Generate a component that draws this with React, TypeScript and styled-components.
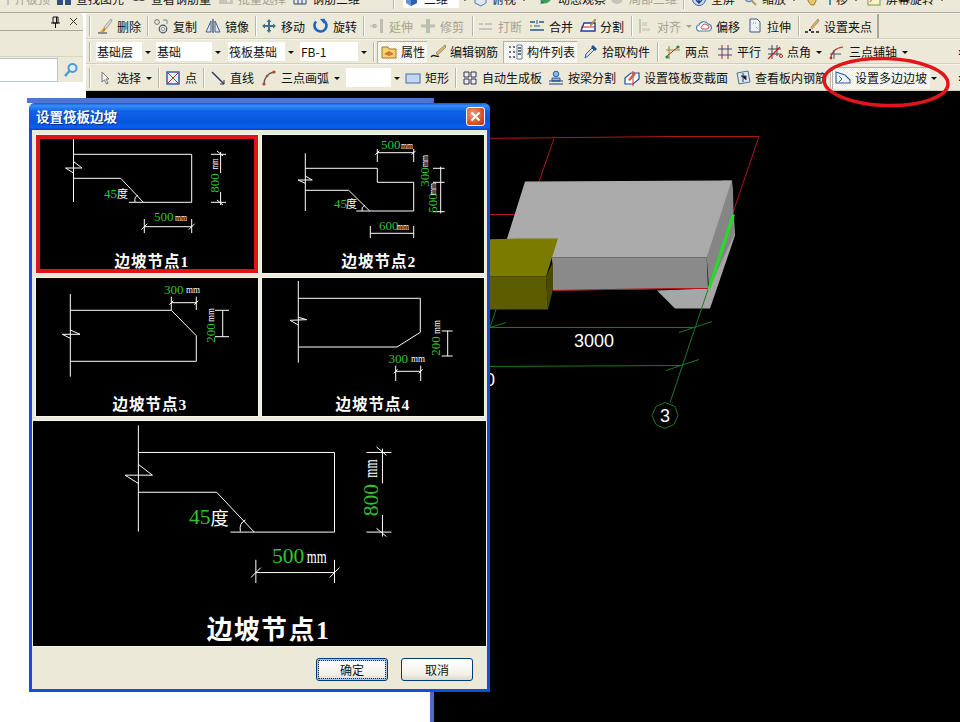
import React from 'react'
import styled, { createGlobalStyle } from 'styled-components'

const UI_FONT = '"Noto Sans CJK SC", "Liberation Sans", sans-serif'
const DRAW_FONT = '"Liberation Serif", "Noto Sans CJK SC", serif'

const GlobalStyle = createGlobalStyle`
  html, body {
    margin: 0;
    padding: 0;
    background: #000;
    overflow: hidden;
  }
`

const Desktop = styled.div`
  position: relative;
  width: 960px;
  height: 722px;
  overflow: hidden;
  display: flex;
  flex-direction: column;
  font-family: ${UI_FONT};
  font-size: 12px;
  color: #111;
`

const Row = styled.div<{ $h: number }>`
  flex: none;
  height: ${p => p.$h}px;
  display: flex;
  align-items: center;
  background: #ece9d8;
  box-sizing: border-box;
  white-space: nowrap;
  overflow: hidden;
`

const TopBar = styled(Row)`
  margin-top: -15px;
  border-bottom: 1px solid #aca899;
`

const Body = styled.div`
  flex: 1;
  display: flex;
  min-height: 0;
`

const LeftPanel = styled.div`
  flex: none;
  width: 86px;
  background: #fff;
  display: flex;
  flex-direction: column;
`

const PanelHead = styled.div`
  width: 83px;
  height: 18px;
  box-sizing: border-box;
  display: flex;
  align-items: center;
  justify-content: flex-end;
  gap: 9px;
  padding-right: 5px;
  background: #ece9d8;
  border-bottom: 1px solid #aca899;
  border-radius: 0 4px 0 0;
`

const PanelBand = styled.div`
  width: 83px;
  height: 26px;
  background: #ece9d8;
  border-bottom: 1px solid #d8d5c2;
  box-sizing: border-box;
`

const SearchRow = styled.div`
  width: 83px;
  height: 25px;
  display: flex;
  align-items: center;
  background: #ece9d8;
`

const SearchBox = styled.div`
  width: 58px;
  height: 24px;
  background: #fff;
  border: 1px solid #b9c4d4;
  border-left: none;
  box-sizing: border-box;
`

const SearchGo = styled.div`
  flex: 1;
  display: flex;
  justify-content: center;
`

const Work = styled.div`
  flex: 1;
  min-width: 0;
  display: flex;
  flex-direction: column;
`

const ToolRow = styled(Row)`
  border-top: 1px solid #f6f4ea;
  border-bottom: 1px solid #d2cfbb;
`

const ShortEdge = styled.div`
  flex: none;
  align-self: stretch;
  width: 2px;
  background: #aca899;
`

const Grip = styled.span`
  flex: none;
  box-sizing: border-box;
  width: 2px;
  height: 20px;
  margin: 0 3px 0 3px;
  border-left: 1px solid #b4b09c;
  border-right: 1px solid #fff;
`

const Sep = styled.span<{ $w?: number }>`
  flex: none;
  width: ${p => p.$w ?? 6}px;
  height: 20px;
  display: flex;
  justify-content: center;
  &::before {
    content: '';
    width: 1px;
    height: 100%;
    background: #b9b5a0;
    box-shadow: 1px 0 0 #fff;
  }
`

const Gap = styled.span<{ $w: number }>`
  flex: none;
  width: ${p => p.$w}px;
`

const ToolBtn = styled.div<{ $w: number; $pad?: number; $off?: boolean; $on?: boolean }>`
  flex: none;
  width: ${p => p.$w}px;
  height: 22px;
  box-sizing: border-box;
  display: flex;
  align-items: center;
  gap: 4px;
  padding-left: ${p => p.$pad ?? 3}px;
  color: ${p => (p.$off ? '#a5a290' : '#111')};
  ${p =>
    p.$on
      ? `background: repeating-conic-gradient(#fff 0 25%, #f0eee2 0 50%) 0 0 / 2px 2px;
         box-shadow: inset 1px 1px 0 #b5b19c;`
      : ''}
  & > svg {
    flex: none;
    opacity: ${p => (p.$off ? 0.45 : 1)};
  }
`

const Arrow = styled.span<{ $off?: boolean }>`
  flex: none;
  width: 0;
  height: 0;
  margin: 1px 0 0 1px;
  border-left: 3px solid transparent;
  border-right: 3px solid transparent;
  border-top: 3px solid ${p => (p.$off ? '#a5a290' : '#111')};
`

const Combo = styled.div<{ $w: number; $after?: number; $before?: number }>`
  flex: none;
  width: ${p => p.$w}px;
  height: 19px;
  margin-left: ${p => p.$before ?? 0}px;
  margin-right: ${p => p.$after ?? 0}px;
  display: flex;
  align-items: center;
`

const ComboField = styled.div`
  flex: 1;
  height: 100%;
  background: #fff;
  display: flex;
  align-items: center;
  gap: 4px;
  padding-left: 1px;
  font-size: 12px;
  line-height: 19px;
  overflow: hidden;
`

const ComboArrow = styled.div`
  flex: none;
  width: 10px;
  display: flex;
  justify-content: center;
`

const Chevron = styled.span`
  margin-left: auto;
  margin-right: -5px;
  font: bold 12px "Liberation Sans", sans-serif;
`

const Canvas = styled.div`
  flex: 1;
  min-height: 0;
  background: #000;
`

const SceneSvg = styled.svg`
  display: block;
  width: 100%;
  height: 100%;
`

const BackWindow = styled.div`
  position: absolute;
  left: 27px;
  top: 98px;
  width: 407px;
  height: 640px;
  box-sizing: border-box;
  background: #fff;
  border-top: 5px solid #4f74d8;
  border-right: 4px solid #4f6cc4;
`

const Dialog = styled.div`
  position: absolute;
  left: 29px;
  top: 103px;
  width: 461px;
  height: 589px;
  box-sizing: border-box;
  display: flex;
  flex-direction: column;
  background: #ece9d8;
  border: 3px solid #0a50d8;
  border-top: none;
  border-radius: 6px 6px 0 0;
`

const TitleBar = styled.div`
  flex: none;
  height: 27px;
  margin: 0 -3px;
  padding: 0 5px 0 7px;
  display: flex;
  align-items: center;
  justify-content: space-between;
  border-radius: 6px 6px 0 0;
  background: linear-gradient(#0a58d8 0, #3a8dfa 10%, #0f63e6 30%, #0656de 70%, #0a5ff0 90%, #0442b8 100%);
`

const TitleText = styled.span`
  font-size: 13.5px;
  font-weight: 700;
  color: #fff;
  text-shadow: 1px 1px 0 #0a2f8c;
  margin-top: -2px;
`

const CloseBtn = styled.div`
  width: 19px;
  height: 19px;
  box-sizing: border-box;
  border: 1px solid #fff;
  border-radius: 3px;
  background: radial-gradient(circle at 35% 35%, #f0a080, #d8532c 60%, #b83010);
  display: flex;
  align-items: center;
  justify-content: center;
`

const Tiles = styled.div`
  flex: none;
  display: grid;
  grid-template-columns: 222px 222px;
  grid-auto-rows: 138px;
  column-gap: 4px;
  row-gap: 5px;
  padding: 5px 0 0 4px;
`

const Tile = styled.div<{ $picked?: boolean }>`
  background: #000;
  box-shadow: 0 0 0 1px #f8f6ec;
  ${p => (p.$picked ? 'outline: 4px solid #e01414; outline-offset: -4px;' : '')}
`

const Preview = styled.div`
  flex: none;
  width: 453px;
  height: 225px;
  margin: 5px 0 0 1px;
  background: #000;
  box-shadow: 0 0 0 1px #f8f6ec;
`

const DiagramSvg = styled.svg`
  display: block;
  width: 100%;
  height: 100%;
`

const Wire = styled.polyline`
  fill: none;
  stroke: #fff;
  stroke-width: 1;
  vector-effect: non-scaling-stroke;
`

const Num = styled.text`
  fill: #2fc42f;
  font-family: ${DRAW_FONT};
  font-size: 13px;
`

const Unit = styled.text`
  fill: #fff;
  font-family: ${DRAW_FONT};
  font-size: 11px;
`

const TileLabel = styled.text`
  fill: #fff;
  font-family: ${DRAW_FONT};
  font-size: 15.5px;
  font-weight: 700;
  letter-spacing: 1px;
  text-anchor: middle;
`

const Footer = styled.div`
  flex: 1;
  display: flex;
  align-items: center;
  justify-content: flex-end;
  gap: 13px;
  padding: 4px 14px 0 0;
`

const DialogBtn = styled.div<{ $focus?: boolean }>`
  width: 72px;
  height: 23px;
  box-sizing: border-box;
  border: 1px solid #003c74;
  border-radius: 3px;
  background: linear-gradient(#fff, #f3f2ea 70%, #dcd8cc);
  display: flex;
  align-items: center;
  justify-content: center;
  font-size: 12px;
  ${p => (p.$focus ? 'box-shadow: inset 0 0 0 2px #a8c0ec; outline: 1px dotted #333; outline-offset: -3px;' : '')}
`

const RedMark = styled.svg`
  position: absolute;
  left: 815px;
  top: 52px;
  width: 145px;
  height: 60px;
`

type IconName =
  | 'find' | 'rebar' | 'batch' | 'rebar3d' | 'cube' | 'look' | 'orbit' | 'local' | 'full' | 'zoom' | 'pan' | 'screen'
  | 'erase' | 'copy' | 'mirror' | 'move' | 'rotate' | 'extend' | 'trim' | 'cut' | 'merge' | 'split' | 'align'
  | 'offset' | 'stretch' | 'grip' | 'prop' | 'edit' | 'list' | 'pick' | 'twoPt' | 'parallel' | 'angle' | 'arcAxis'
  | 'select' | 'point' | 'line' | 'arc' | 'rect' | 'auto' | 'beam' | 'section' | 'inspect' | 'slope'

const ToolIcon: React.FC<{ name: IconName }> = ({ name }) => {
  const shapes: Record<IconName, React.ReactNode> = {
    find: <><path d="M1 3h6v4H1zM9 3h6v4H9zM1 9h6v5H1zM9 9h6v5H9z" fill="#35507e" /></>,
    rebar: <><circle cx="5" cy="6" r="3" fill="none" stroke="#444" strokeWidth="2" /><circle cx="11" cy="6" r="3" fill="none" stroke="#444" strokeWidth="2" /></>,
    batch: <><rect x="1" y="2" width="14" height="11" fill="#999" /><path d="M4 5h3v3H4zM9 8h3v3H9z" fill="#eee" /></>,
    rebar3d: <><path d="M2 3h12v10H2zM6 3v10M10 3v10M2 8h12" fill="none" stroke="#234a8c" /></>,
    cube: <><path d="M2 5l5-3 6 2v8l-6 3-5-3z" fill="#5f8fd8" /><path d="M7 7v8l6-3V4z" fill="#2f5fae" /></>,
    look: <><path d="M3 5l6-3 5 3v7l-5 3-6-3z" fill="#dfe8f4" stroke="#5577a8" /></>,
    orbit: <><ellipse cx="8" cy="8" rx="6" ry="4" fill="#3e9b58" transform="rotate(-30 8 8)" /><path d="M2 13l4-1-2-2z" fill="#1f5f8e" /></>,
    local: <><circle cx="8" cy="7" r="6" fill="#999" /><circle cx="8" cy="7" r="2" fill="#ccc" /></>,
    full: <><circle cx="8" cy="8" r="6.5" fill="#cfdcf0" stroke="#32609e" /><path d="M8 4v8M5 9l3 3 3-3" fill="none" stroke="#1f3f78" strokeWidth="1.4" /></>,
    zoom: <><circle cx="7" cy="6" r="4.5" fill="#dce9f8" stroke="#6f8aaa" strokeWidth="1.4" /><path d="M10 10l4 4" stroke="#b49a5a" strokeWidth="2" /></>,
    pan: <><path d="M4 7l2-4 2 3 2-3 2 4v3l-2 4H7L4 10z" fill="#e9c46a" stroke="#8a6a20" strokeWidth=".8" /></>,
    screen: <><rect x="2" y="2" width="12" height="12" fill="#f7f2cc" stroke="#7a9a4a" /><path d="M4 11l3-4 2 2 3-4" fill="none" stroke="#d04a3a" /></>,
    erase: <><path d="M14 1L7 9l2 2 6-8z" fill="#d8d8d8" stroke="#777" strokeWidth=".6" /><path d="M7 9l2 2-2 3H3z" fill="#e8b020" /><path d="M7 10l1 2-2 2z" fill="#c04a8a" /><path d="M1 15h9" stroke="#333" /></>,
    copy: <><circle cx="4" cy="4" r="2.4" fill="none" stroke="#677" /><circle cx="10" cy="11" r="3.8" fill="none" stroke="#456" strokeWidth="1.2" /><circle cx="10" cy="11" r="1.8" fill="none" stroke="#89a" /><path d="M10 2h4v4" fill="none" stroke="#789" /></>,
    mirror: <><path d="M1 14L6 3v11zM15 14L10 3v11z" fill="#dfe6f2" stroke="#3a5f94" /><path d="M8 1v14" stroke="#123" /></>,
    move: <><path d="M8 1l2.4 3H9v3h3V5.6L15 8l-3 2.4V9H9v3h1.4L8 15l-2.4-3H7V9H4v1.4L1 8l3-2.4V7h3V4H5.6z" fill="#3f6f8a" /></>,
    rotate: <><path d="M3 3.5a6 6 0 1 0 8-.8" fill="none" stroke="#1f62c8" strokeWidth="2.6" /><path d="M7 1l5-.2-1 5z" fill="#1f62c8" /></>,
    extend: <><path d="M1 8h7M4 6.5h3v3H4z" stroke="#777" fill="#bbb" /><rect x="11" y="1" width="3" height="14" fill="#888" /></>,
    trim: <><path d="M6 1h4v14H6z" fill="#888" /><path d="M1 8h14" stroke="#888" strokeWidth="3" /></>,
    cut: <><path d="M1 5h4v2H1zM7 5h7v2H7zM1 10h13v2H1z" fill="#999" /></>,
    merge: <><path d="M1 4h5M10 4h5M1 12h14" stroke="#245a8a" strokeWidth="1.6" /><path d="M8 2v4M5 8h6" stroke="#245a8a" /><circle cx="2" cy="8" r="1" fill="#d08a20" /></>,
    split: <><path d="M1 13l3-8h11v8z" fill="#fff" stroke="#223c9c" strokeWidth="1.4" /><path d="M1 9h14" stroke="#c02020" /><path d="M10 7l5-6 1 1-5 6z" fill="#d8b040" stroke="#6a4a10" strokeWidth=".5" /></>,
    align: <><path d="M3 1v14" stroke="#999" strokeWidth="2" /><path d="M5 4h5v4H5zM5 10h8v3H5z" fill="#bbb" /></>,
    offset: <><path d="M4 13a3 3 0 0 1-1-6 5 5 0 0 1 9-1 3.6 3.6 0 0 1 1 7z" fill="#fff" stroke="#4a86b4" strokeWidth="1.2" /><path d="M6 11a2 2 0 0 1 0-3 3 3 0 0 1 5-1 2 2 0 0 1 0 4z" fill="none" stroke="#d04040" /></>,
    stretch: <><path d="M3 1h7l3 3v10H3z" fill="#eef3fa" stroke="#345a86" /><path d="M9 9l3 3M6 5h3" stroke="#888" strokeDasharray="1 1" /></>,
    grip: <><path d="M14 1L7 9l1 2 7-8z" fill="#e8b060" stroke="#765" strokeWidth=".6" /><path d="M1 14h3M7 14h3M12 14h3" stroke="#111" strokeWidth="1.4" /><rect x="5" y="11" width="2" height="2" fill="#111" /></>,
    prop: <><path d="M1 3h6l1 2h7v9H1z" fill="#f3d274" stroke="#a47a22" /><path d="M3 10l5-3 5 3-5 2z" fill="#d8722c" /></>,
    edit: <><path d="M15 1L6 9l1.6 2L16 3z" fill="#e8c060" stroke="#555" strokeWidth=".6" /><path d="M1 13c3-4 5 1 8-1" fill="none" stroke="#222" strokeWidth="1.3" /></>,
    list: <><path d="M10 1h5v14h-5z" fill="#fff" stroke="#5a7a9a" /><path d="M11 4h3M11 7h3M11 10h3M2 3h2M6 3h2M2 8h2M6 8h2M2 13h2M6 13h2" stroke="#3a4a6a" strokeWidth="1.4" /></>,
    pick: <><path d="M3 14l1-4 6-6 2 2-6 6z" fill="#d4e4f8" stroke="#2f5f9e" /><path d="M9 3l2-2 4 4-2 2z" fill="#224f90" /></>,
    twoPt: <><path d="M4 2v13M1 6h14" stroke="#884" strokeWidth="1" /><path d="M1 13L14 2" stroke="#c02020" /><circle cx="2" cy="13" r="1.6" fill="#2a8a2a" /><circle cx="13" cy="3" r="1.6" fill="#2a8a2a" /></>,
    parallel: <><path d="M5 1v14M11 1v14" stroke="#a03040" /><path d="M1 5h14M1 11h14" stroke="#3a4a8a" /></>,
    angle: <><path d="M5 1v14M10 1v11M1 5h13M1 10h13" stroke="#445" /><path d="M1 15L13 3" stroke="#c02020" strokeWidth="1.3" /><circle cx="14" cy="12" r="1.5" fill="none" stroke="#c02020" /></>,
    arcAxis: <><path d="M2 15c0-7 5-11 12-12" fill="none" stroke="#c03030" strokeWidth="1.2" /><path d="M5 6v9M1 10h11" stroke="#556" /><circle cx="2" cy="14" r="1.4" fill="#c03030" /></>,
    select: <><path d="M5 2v10l2.4-2.2L9.5 14l1.6-.8L9 9h3z" fill="#f4f4f4" stroke="#777" /></>,
    point: <><rect x="2" y="2" width="12" height="12" fill="#e8eef8" stroke="#2f4f9e" strokeWidth="1.4" /><path d="M3 3l10 10M13 3L3 13" stroke="#d03030" /></>,
    line: <><path d="M2 2l12 12" stroke="#335" strokeWidth="1.4" /><path d="M14 14h-4M14 14v-4" stroke="#335" /></>,
    arc: <><path d="M3 14c0-6 4-11 10-12" fill="none" stroke="#555" strokeWidth="1.3" /><circle cx="3" cy="14" r="1.6" fill="#c0402c" /><circle cx="6" cy="6" r="1.3" fill="#c0402c" /><circle cx="13" cy="2" r="1.6" fill="#c0402c" /></>,
    rect: <><rect x="1" y="4" width="14" height="9" fill="#c3d6f2" stroke="#446ca8" /></>,
    auto: <><path d="M2 2h5v5H2zM9 2h5v5H9zM2 9h5v5H2zM9 9h5v5H9z" fill="#eef" stroke="#334" /></>,
    beam: <><circle cx="8" cy="4" r="2.8" fill="#8cb4e8" stroke="#2f5f9e" /><path d="M4 8h8v3H4z" fill="#8cb4e8" stroke="#2f5f9e" /><path d="M1 11h14M1 14h14" stroke="#1f3f78" strokeWidth="1.2" /></>,
    section: <><path d="M1 14V8l6-5h8v6l-6 5z" fill="#fff" stroke="#234a9a" strokeWidth="1.2" /><path d="M9 1v15" stroke="#d03030" /><path d="M4 10l6-8 2 2-6 7z" fill="#d85a3c" /></>,
    inspect: <><path d="M2 3l11-2 2 11-11 2z" fill="#d8e4f2" stroke="#54708e" /><path d="M6 6h5v4M8 3v9" stroke="#345" /></>,
    slope: <><path d="M1 13V2l9 3 5 5v3z" fill="#eef3fa" stroke="#2f5f9e" strokeWidth="1.1" /><path d="M4 6l3 3-3 3" fill="none" stroke="#2f5f9e" /></>,
  }
  return (
    <svg width="16" height="16" viewBox="0 0 16 16">
      {shapes[name]}
    </svg>
  )
}

const Tool: React.FC<{
  icon: IconName
  label: string
  w: number
  pad?: number
  off?: boolean
  on?: boolean
  arrow?: boolean
}> = ({ icon, label, w, pad, off, on, arrow }) => (
  <ToolBtn $w={w} $pad={pad} $off={off} $on={on}>
    <ToolIcon name={icon} />
    <span>{label}</span>
    {arrow && <Arrow $off={off} />}
  </ToolBtn>
)

const Select: React.FC<{ text?: string; w: number; before?: number; after?: number; icon?: IconName }> = ({
  text,
  w,
  before,
  after,
  icon,
}) => (
  <Combo $w={w} $before={before} $after={after}>
    <ComboField>
      {icon && <ToolIcon name={icon} />}
      {text}
    </ComboField>
    <ComboArrow>
      <Arrow />
    </ComboArrow>
  </Combo>
)

// dimension tick, the short slash on the end of a measure line
const Tick: React.FC<{ x: number; y: number; r?: number }> = ({ x, y, r = 4 }) => (
  <Wire points={`${x - r},${y + r} ${x + r},${y - r}`} />
)

// the "mm" in these drawings is squeezed, so its length is given
const Mm: React.FC<{ x: number; y: number; len: number }> = ({ x, y, len }) => (
  <Unit x={x} y={y} textLength={len} lengthAdjust="spacingAndGlyphs">mm</Unit>
)

const VText: React.FC<{ x: number; y: number; len?: number; children: string }> = ({ x, y, len, children }) => {
  const Tag = len ? Unit : Num
  return (
    <Tag
      x={x}
      y={y}
      textAnchor="middle"
      dominantBaseline="central"
      textLength={len}
      lengthAdjust={len ? 'spacingAndGlyphs' : undefined}
      transform={`rotate(-90 ${x} ${y})`}
    >
      {children}
    </Tag>
  )
}

// same drawing is used for the small tile and the big preview
const NodeOne: React.FC = () => (
  <>
    <Wire points="37.5,3 37.5,67" />
    <Wire points="37.5,19.3 155.7,19.3 155.7,67.3 93,67.3" />
    <Wire points="37.5,43.3 84.7,43.3 107.3,67.3" />
    <Wire points="37.5,26.5 46,33 29.5,33 37.5,38" />
    <path d="M99 67 q-1 -5 3 -7" fill="none" stroke="#fff" vectorEffect="non-scaling-stroke" />
    <Wire points="175,19.3 190,19.3" />
    <Wire points="175,67.3 190,67.3" />
    <Wire points="184.6,17 184.6,38" />
    <Wire points="184.6,57 184.6,70" />
    <Wire points="181,16 187,21" />
    <Wire points="181,65 187,70" />
    <VText x={178} y={48}>800</VText>
    <VText x={178} y={29} len={11}>mm</VText>
    <Wire points="108.3,91.7 155.7,91.7" />
    <Wire points="108.3,84 108.3,98" />
    <Wire points="155.7,84 155.7,98" />
    <Tick x={108.3} y={91.7} r={3} />
    <Tick x={155.7} y={91.7} r={3} />
    <Num x={68} y={62.5}>45</Num>
    <Unit x={81} y={63} fontSize={13}>度</Unit>
    <Num x={118} y={86}>500</Num>
    <Mm x={139} y={86} len={12} />
    <TileLabel x={116} y={132}>边坡节点1</TileLabel>
  </>
)

const NodeTwo: React.FC = () => (
  <>
    <Wire points="43.3,18.3 43.3,76" />
    <Wire points="43.3,33.3 115.3,33.3 115.3,47.3 151.7,47.3 151.7,76 94.3,76" />
    <Wire points="43.3,55.3 86.7,55.3 107.7,76" />
    <Wire points="43.3,41 50.3,45 36,45 43.3,48.3" />
    <path d="M100 76 q-1 -4 3 -6" fill="none" stroke="#fff" />
    <Wire points="115.3,17.7 151.7,17.7" />
    <Wire points="115.3,14 115.3,27" />
    <Wire points="151.7,14 151.7,27" />
    <Tick x={115.3} y={17.7} r={2} />
    <Tick x={151.7} y={17.7} r={2} />
    <Wire points="178.7,31.7 178.7,78.3" />
    <Wire points="171,33.3 182.7,33.3" />
    <Wire points="171,47.3 182.7,47.3" />
    <Wire points="171,76.7 182.7,76.7" />
    <Wire points="108.3,98.3 151.7,98.3" />
    <Wire points="108.3,91 108.3,103" />
    <Wire points="151.7,91 151.7,103" />
    <Num x={119} y={14}>500</Num>
    <Mm x={139} y={14} len={12} />
    <VText x={162} y={42}>300</VText>
    <VText x={162} y={26} len={12}>mm</VText>
    <VText x={170} y={68}>500</VText>
    <VText x={170} y={54} len={12}>mm</VText>
    <Num x={117} y={95}>600</Num>
    <Mm x={135} y={95} len={12} />
    <Num x={72} y={73}>45</Num>
    <Unit x={84} y={73} fontSize={13}>度</Unit>
    <TileLabel x={117} y={132}>边坡节点2</TileLabel>
  </>
)

const NodeThree: React.FC = () => (
  <>
    <Wire points="34.3,16 34.3,98.7" />
    <Wire points="34.3,32.3 135.3,32.3 160.3,57.7 160.3,83.3 34.3,83.3" />
    <Wire points="34.3,52 44,56.3 26.3,56.3 34.3,60.3" />
    <Wire points="135.3,24.7 160.3,24.7" />
    <Wire points="135.3,18.7 135.3,32" />
    <Wire points="160.3,18.7 160.3,32" />
    <Tick x={135.3} y={24.7} r={2} />
    <Tick x={160.3} y={24.7} r={2} />
    <Wire points="186.7,32 186.7,59" />
    <Wire points="179,32.3 193,32.3" />
    <Wire points="179,58.7 193,58.7" />
    <Num x={128} y={16}>300</Num>
    <Mm x={150} y={15} len={14} />
    <VText x={174} y={55}>200</VText>
    <VText x={174} y={37} len={14}>mm</VText>
    <TileLabel x={114} y={132}>边坡节点3</TileLabel>
  </>
)

const NodeFour: React.FC = () => (
  <>
    <Wire points="36.3,3 36.3,84.7" />
    <Wire points="36.3,20.3 158.3,20.3 158.3,54.3 135,69 36.3,69" />
    <Wire points="36.3,39.3 44.7,41.7 28,42.3 36.3,47" />
    <Wire points="133.7,93.3 158.7,93.3" />
    <Wire points="133.7,87.7 133.7,103" />
    <Wire points="158.7,87.7 158.7,103" />
    <Tick x={133.7} y={93.3} r={2} />
    <Tick x={158.7} y={93.3} r={2} />
    <Wire points="185.7,52.7 185.7,78" />
    <Wire points="179.7,53 190.7,53" />
    <Wire points="179.7,78 190.7,78" />
    <Num x={126.5} y={84.5}>300</Num>
    <Mm x={149} y={84} len={14} />
    <VText x={173.5} y={68}>200</VText>
    <VText x={173.5} y={49} len={14}>mm</VText>
    <TileLabel x={111} y={132}>边坡节点4</TileLabel>
  </>
)

const Scene: React.FC = () => (
  <SceneSvg viewBox="86 92 874 630">
    {/* red outline of the raft */}
    <g fill="none" stroke="#b01818" strokeWidth="1">
      <polyline points="480,139 672,137 759,137 733,213" />
      <polyline points="554,139 539,182" />
      <polyline points="480,215 516,215" />
    </g>
    {/* grey slab */}
    <polygon points="657,291 675,309 710,309 735,236 734,218 708,289" fill="#a6a6a6" />
    <polygon points="722,181 732,181 733,190 734,236 709,289 706.7,258" fill="#858585" />
    <polygon points="525,182 722,181 731.7,181 706.7,258 552,258 500,258 506.7,240" fill="#aaaaaa" />
    <polygon points="552,258 706.7,258 708,289 553,291" fill="#8a8a8a" />
    <polyline points="553,291 668,289 708,289" fill="none" stroke="#b01818" strokeWidth="1" />
    <line x1="733.5" y1="215" x2="709" y2="289" stroke="#22e022" strokeWidth="3" />
    {/* olive beam */}
    <polygon points="480,240 518,239 558,239 552,258 546,277 480,277" fill="#7b7b00" />
    <polygon points="480,277 546,277 548,310 480,310" fill="#5c5c00" />
    <polygon points="546,277 553,262 553,290 548,310" fill="#4a4a00" />
    {/* axis grid */}
    <g fill="none" stroke="#1c7a1c" strokeWidth="1">
      <polyline points="708,290 670,403" />
      <polyline points="480,328 695,328" />
      <polyline points="679,333 712,322" />
      <polyline points="480,367 682,366" />
      <polyline points="666,371 699,360" />
      <polyline points="490,328 506,323" />
      <polyline points="496,310 490,328" />
      <polygon points="665,403 675,407 678,416 674,425 665,429 656,425 652,416 656,407" />
    </g>
    <g fill="#fff" fontFamily='"Liberation Sans", sans-serif' fontSize="18">
      <text x="574" y="347">3000</text>
      <text x="485" y="386">0</text>
      <text x="665" y="422" textAnchor="middle">3</text>
    </g>
  </SceneSvg>
)

export default function App() {
  return (
    <Desktop>
      <GlobalStyle />
      <TopBar $h={28}>
        <ToolBtn $w={53} $pad={2} $off>
          <span>平齐板顶</span>
        </ToolBtn>
        <Tool icon="find" label="查找图元" w={75} />
        <Tool icon="rebar" label="查看钢筋量" w={87} />
        <Tool icon="batch" label="批量选择" w={74} off />
        <Tool icon="rebar3d" label="钢筋三维" w={74} />
        <Gap $w={27} />
        <Sep />
        <Select icon="cube" text="二维" w={66} before={7} />
        <Tool icon="look" label="俯视" w={66} arrow />
        <Tool icon="orbit" label="动态观察" w={71} />
        <Tool icon="local" label="局部三维" w={74} off />
        <Sep />
        <Tool icon="full" label="全屏" w={53} pad={5} />
        <Tool icon="zoom" label="缩放" w={62} arrow />
        <Tool icon="pan" label="平移" w={62} arrow />
        <Tool icon="screen" label="屏幕旋转" w={90} arrow />
      </TopBar>
      <Body>
        <LeftPanel>
          <PanelHead>
            <svg width="9" height="12" viewBox="0 0 9 12">
              <path d="M2 1h5v6H2zM0 7h9M4.5 7v5M5.5 1v6" fill="none" stroke="#111" />
            </svg>
            <svg width="9" height="9" viewBox="0 0 9 9">
              <path d="M1 1l7 7M8 1L1 8" stroke="#333" />
            </svg>
          </PanelHead>
          <PanelBand />
          <SearchRow>
            <SearchBox />
            <SearchGo>
              <svg width="16" height="16" viewBox="0 0 16 16">
                <circle cx="9.5" cy="6" r="4" fill="#dff0fb" stroke="#4a9ad4" strokeWidth="2" />
                <path d="M6.5 9L2 14" stroke="#4a9ad4" strokeWidth="2.6" />
              </svg>
            </SearchGo>
          </SearchRow>
        </LeftPanel>
        <Work>
          <ToolRow $h={26}>
            <Grip />
            <Tool icon="erase" label="删除" w={50} />
            <Sep />
            <Tool icon="copy" label="复制" w={52} />
            <Tool icon="mirror" label="镜像" w={50} />
            <Sep />
            <Tool icon="move" label="移动" w={52} />
            <Tool icon="rotate" label="旋转" w={50} />
            <Sep />
            <Tool icon="extend" label="延伸" w={51} off />
            <Tool icon="trim" label="修剪" w={52} off />
            <Sep />
            <Tool icon="cut" label="打断" w={51} off />
            <Tool icon="merge" label="合并" w={51} />
            <Tool icon="split" label="分割" w={51} />
            <Sep />
            <Tool icon="align" label="对齐" w={59} off arrow />
            <Tool icon="offset" label="偏移" w={51} />
            <Tool icon="stretch" label="拉伸" w={51} />
            <Sep />
            <Tool icon="grip" label="设置夹点" w={76} />
            <ShortEdge />
          </ToolRow>
          <ToolRow $h={25}>
            <Grip />
            <Select text="基础层" w={56} before={2} after={4} />
            <Select text="基础" w={66} after={6} />
            <Select text="筏板基础" w={67} after={5} />
            <Select text="FB-1" w={68} after={2} />
            <Sep $w={7} />
            <Tool icon="prop" label="属性" w={50} pad={4} on />
            <Tool icon="edit" label="编辑钢筋" w={76} />
            <Tool icon="list" label="构件列表" w={74} pad={4} on />
            <Tool icon="pick" label="拾取构件" w={76} pad={5} />
            <Sep $w={9} />
            <Tool icon="twoPt" label="两点" w={52} />
            <Tool icon="parallel" label="平行" w={50} />
            <Tool icon="angle" label="点角" w={62} arrow />
            <Tool icon="arcAxis" label="三点辅轴" w={90} arrow />
            <Chevron>»</Chevron>
          </ToolRow>
          <ToolRow $h={27}>
            <Grip />
            <Tool icon="select" label="选择" w={61} arrow />
            <Sep />
            <Tool icon="point" label="点" w={39} pad={4} />
            <Sep />
            <Tool icon="line" label="直线" w={50} pad={4} />
            <Tool icon="arc" label="三点画弧" w={87} pad={5} arrow />
            <Select w={55} before={3} />
            <Tool icon="rect" label="矩形" w={51} pad={4} />
            <Sep />
            <Tool icon="auto" label="自动生成板" w={86} pad={4} />
            <Tool icon="beam" label="按梁分割" w={76} pad={4} />
            <Tool icon="section" label="设置筏板变截面" w={112} pad={4} />
            <Tool icon="inspect" label="查看板内钢筋" w={97} />
            <Sep $w={3} />
            <Tool icon="slope" label="设置多边边坡" w={98} on />
            <Arrow />
            <Chevron>»</Chevron>
          </ToolRow>
          <Canvas>
            <Scene />
          </Canvas>
        </Work>
      </Body>

      <BackWindow />
      <Dialog>
        <TitleBar>
          <TitleText>设置筏板边坡</TitleText>
          <CloseBtn>
            <svg width="11" height="11" viewBox="0 0 11 11">
              <path d="M1.5 1.5l8 8M9.5 1.5l-8 8" stroke="#fff" strokeWidth="2" />
            </svg>
          </CloseBtn>
        </TitleBar>
        <Tiles>
          <Tile $picked>
            <DiagramSvg viewBox="0 0 222 138"><NodeOne /></DiagramSvg>
          </Tile>
          <Tile>
            <DiagramSvg viewBox="0 0 222 138"><NodeTwo /></DiagramSvg>
          </Tile>
          <Tile>
            <DiagramSvg viewBox="0 0 222 138"><NodeThree /></DiagramSvg>
          </Tile>
          <Tile>
            <DiagramSvg viewBox="0 0 222 138"><NodeFour /></DiagramSvg>
          </Tile>
        </Tiles>
        <Preview>
          <DiagramSvg viewBox="-26 0.4 273 135.5"><NodeOne /></DiagramSvg>
        </Preview>
        <Footer>
          <DialogBtn $focus>确定</DialogBtn>
          <DialogBtn>取消</DialogBtn>
        </Footer>
      </Dialog>
      <RedMark viewBox="815 52 145 60">
        <ellipse cx="886" cy="82" rx="62" ry="23.5" fill="none" stroke="#e4141c" strokeWidth="3.5" transform="rotate(2 886 82)" />
      </RedMark>
    </Desktop>
  )
}
